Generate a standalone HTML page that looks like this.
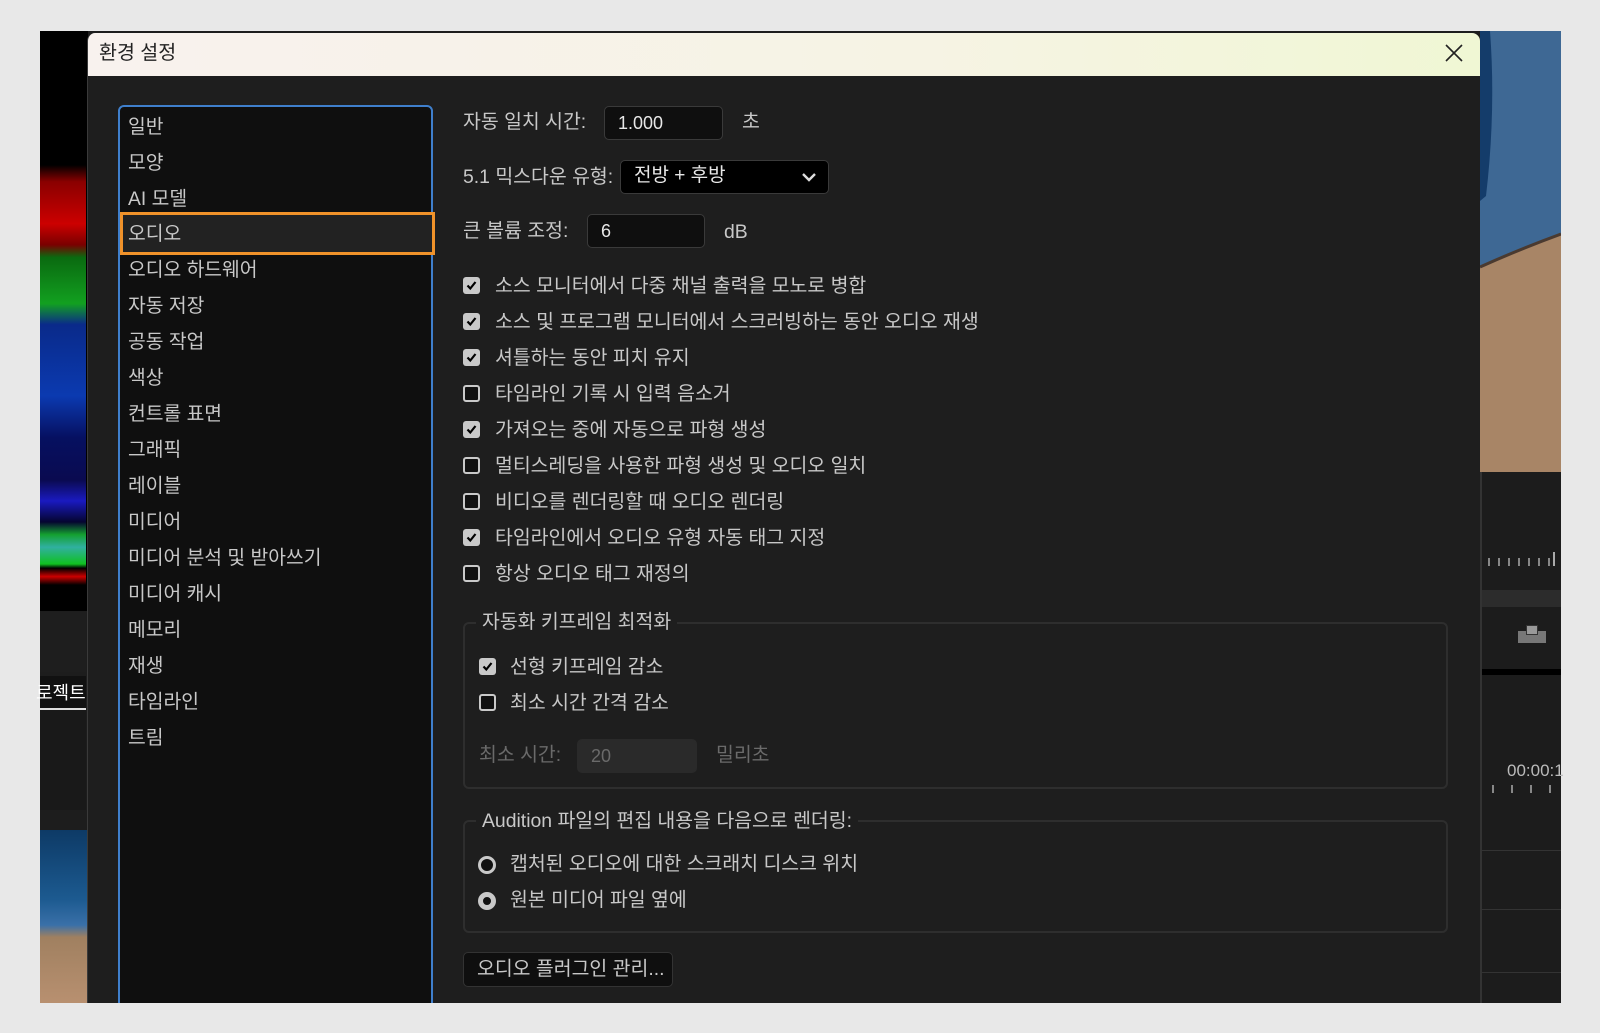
<!DOCTYPE html>
<html><head><meta charset="utf-8"><style>
*{margin:0;padding:0;box-sizing:border-box}
body{width:1600px;height:1033px;background:#e8e8e8;position:relative;overflow:hidden;font-family:"Liberation Sans","Noto Sans CJK KR",sans-serif}
.a{position:absolute}
.t{position:absolute;color:#c8c8c8;font-size:19.4px;line-height:22px;white-space:nowrap}
.cb{position:absolute;width:17px;height:17px;border-radius:3px}
.on{background:#c9c9c9}
.on svg{position:absolute;left:3px;top:3px}
.off{border:2.5px solid #c9c9c9;background:#111}
.inp{position:absolute;background:#0f0f0f;border:1px solid #3a3a3a;border-radius:5px;color:#e8e8e8;font-size:18px;padding-left:13px;line-height:32px}
.li{position:absolute;left:128px;color:#c8c8c8;font-size:19.3px;line-height:36px;white-space:nowrap}
</style></head><body>
<div class="a" style="left:40px;top:31px;width:1521px;height:972px;background:#1d1d1d"></div>
<div class="a" style="left:40px;top:31px;width:48px;height:580px;background:#000"></div>
<div class="a" style="left:40px;top:165px;width:46px;height:420px;background:linear-gradient(#000 0%,#8a0000 4%,#c00 14%,#7a0000 19%,#0a6a10 22%,#12a020 33%,#0a2a8a 38%,#0b3ab0 55%,#061060 65%,#0a0a50 75%,#1a1ac0 80%,#050530 85%,#14a030 88%,#30b0a0 91%,#10c020 95%,#000 96%,#c00 98%,#000 100%)"></div>
<div class="a" style="left:40px;top:612px;width:46px;height:60px;background:#1e1e1e"></div>
<div class="a" style="left:40px;top:676px;width:46px;height:36px;background:#111"></div>
<div class="t" style="left:36px;top:682px;color:#fff;font-size:18px">로젝트:</div>
<div class="a" style="left:40px;top:708px;width:46px;height:2px;background:#ddd"></div>
<div class="a" style="left:40px;top:710px;width:46px;height:100px;background:#191919"></div>
<div class="a" style="left:40px;top:830px;width:48px;height:173px;background:linear-gradient(#0d3a66 0%,#1c5a90 40%,#3a70a8 55%,#a08060 62%,#b89070 100%)"></div>
<svg class="a" style="left:1480px;top:31px" width="81" height="441" viewBox="0 0 81 441"><rect width="81" height="441" fill="#a88566"/><path d="M0 0H81V203Q40 218 0 236Z" fill="#3e6894"/><path d="M0 0H10Q16 80 6 165L0 170Z" fill="#143c6a"/><path d="M0 236Q40 218 81 203" stroke="#4a3a30" stroke-width="3" fill="none"/></svg>
<div class="a" style="left:1480px;top:472px;width:81px;height:531px;background:#1c1c1c;border-left:2px solid #333"></div>
<div class="a" style="left:1488px;top:558px;width:70px;height:8px;background:repeating-linear-gradient(90deg,#888 0 2px,transparent 2px 10px)"></div>
<div class="a" style="left:1553px;top:552px;width:2px;height:14px;background:#aaa"></div>
<div class="a" style="left:1482px;top:590px;width:79px;height:17px;background:#2c2c2c"></div>
<div class="a" style="left:1518px;top:631px;width:28px;height:12px;background:#777"></div>
<div class="a" style="left:1526px;top:625px;width:12px;height:10px;background:#999;border:1px solid #333"></div>
<div class="a" style="left:1482px;top:669px;width:79px;height:6px;background:#000"></div>
<div class="t" style="left:1507px;top:760px;font-size:17px;color:#bbb">00:00:1</div>
<div class="a" style="left:1492px;top:785px;width:65px;height:8px;background:repeating-linear-gradient(90deg,#888 0 2px,transparent 2px 19px)"></div>
<div class="a" style="left:1482px;top:850px;width:79px;height:1px;background:#333"></div>
<div class="a" style="left:1482px;top:909px;width:79px;height:1px;background:#333"></div>
<div class="a" style="left:1482px;top:972px;width:79px;height:1px;background:#333"></div>
<div class="a" style="left:87px;top:33px;width:1393px;height:970px;background:#1e1e1e;border-radius:8px 8px 0 0;overflow:hidden;border-left:1px solid #3a3a3a">
 <div class="a" style="left:0;top:0;width:1393px;height:43px;background:linear-gradient(90deg,#f8f2ee,#f6f3e4 60%,#f0f7d4)"></div>
</div>
<div class="t" style="left:99px;top:42px;color:#222;font-size:19.5px">환경 설정</div>
<svg class="a" style="left:1445px;top:44px" width="18" height="18" viewBox="0 0 18 18"><path d="M1 1L17 17M17 1L1 17" stroke="#222" stroke-width="1.6"/></svg>
<div class="a" style="left:118px;top:105px;width:315px;height:910px;background:#0f0f0f;border:2px solid #3f7fcc;border-radius:6px"></div>
<div class="a" style="left:120px;top:212px;width:315px;height:43px;background:#222;border:3px solid #f0922a"></div>
<div class="li" style="top:110px">일반</div>
<div class="li" style="top:146px">모양</div>
<div class="li" style="top:182px">AI 모델</div>
<div class="li" style="top:217px">오디오</div>
<div class="li" style="top:253px">오디오 하드웨어</div>
<div class="li" style="top:289px">자동 저장</div>
<div class="li" style="top:325px">공동 작업</div>
<div class="li" style="top:361px">색상</div>
<div class="li" style="top:397px">컨트롤 표면</div>
<div class="li" style="top:433px">그래픽</div>
<div class="li" style="top:469px">레이블</div>
<div class="li" style="top:505px">미디어</div>
<div class="li" style="top:541px">미디어 분석 및 받아쓰기</div>
<div class="li" style="top:577px">미디어 캐시</div>
<div class="li" style="top:613px">메모리</div>
<div class="li" style="top:649px">재생</div>
<div class="li" style="top:685px">타임라인</div>
<div class="li" style="top:721px">트림</div>

<div class="t" style="left:463px;top:111px">자동 일치 시간:</div>
<div class="inp" style="left:604px;top:106px;width:119px;height:34px">1.000</div>
<div class="t" style="left:742px;top:111px">초</div>
<div class="t" style="left:463px;top:166px">5.1 믹스다운 유형:</div>
<div class="inp" style="left:620px;top:160px;width:209px;height:34px;background:#000;font-size:19px;line-height:30px">전방 + 후방</div>
<svg class="a" style="left:801px;top:172px" width="16" height="10" viewBox="0 0 16 10"><path d="M2 2L8 8L14 2" stroke="#ddd" stroke-width="2.4" fill="none"/></svg>
<div class="t" style="left:463px;top:220px">큰 볼륨 조정:</div>
<div class="inp" style="left:587px;top:214px;width:118px;height:34px">6</div>
<div class="t" style="left:724px;top:221px">dB</div>

<div class="cb on" style="left:463px;top:277px"><svg width="11" height="11"><path d="M1.5 5.5L4.3 8.5L9.5 2" stroke="#000" stroke-width="2.2" fill="none"/></svg></div><div class="t" style="left:495px;top:275px">소스 모니터에서 다중 채널 출력을 모노로 병합</div>
<div class="cb on" style="left:463px;top:313px"><svg width="11" height="11"><path d="M1.5 5.5L4.3 8.5L9.5 2" stroke="#000" stroke-width="2.2" fill="none"/></svg></div><div class="t" style="left:495px;top:311px">소스 및 프로그램 모니터에서 스크러빙하는 동안 오디오 재생</div>
<div class="cb on" style="left:463px;top:349px"><svg width="11" height="11"><path d="M1.5 5.5L4.3 8.5L9.5 2" stroke="#000" stroke-width="2.2" fill="none"/></svg></div><div class="t" style="left:495px;top:347px">셔틀하는 동안 피치 유지</div>
<div class="cb off" style="left:463px;top:385px"></div><div class="t" style="left:495px;top:383px">타임라인 기록 시 입력 음소거</div>
<div class="cb on" style="left:463px;top:421px"><svg width="11" height="11"><path d="M1.5 5.5L4.3 8.5L9.5 2" stroke="#000" stroke-width="2.2" fill="none"/></svg></div><div class="t" style="left:495px;top:419px">가져오는 중에 자동으로 파형 생성</div>
<div class="cb off" style="left:463px;top:457px"></div><div class="t" style="left:495px;top:455px">멀티스레딩을 사용한 파형 생성 및 오디오 일치</div>
<div class="cb off" style="left:463px;top:493px"></div><div class="t" style="left:495px;top:491px">비디오를 렌더링할 때 오디오 렌더링</div>
<div class="cb on" style="left:463px;top:529px"><svg width="11" height="11"><path d="M1.5 5.5L4.3 8.5L9.5 2" stroke="#000" stroke-width="2.2" fill="none"/></svg></div><div class="t" style="left:495px;top:527px">타임라인에서 오디오 유형 자동 태그 지정</div>
<div class="cb off" style="left:463px;top:565px"></div><div class="t" style="left:495px;top:563px">항상 오디오 태그 재정의</div>

<div class="a" style="left:463px;top:622px;width:985px;height:167px;border:2px solid #2e2e2e;border-radius:6px"></div>
<div class="t" style="left:476px;top:611px;background:#1e1e1e;padding:0 6px">자동화 키프레임 최적화</div>
<div class="cb on" style="left:479px;top:658px"><svg width="11" height="11"><path d="M1.5 5.5L4.3 8.5L9.5 2" stroke="#000" stroke-width="2.2" fill="none"/></svg></div><div class="t" style="left:510px;top:656px">선형 키프레임 감소</div>
<div class="cb off" style="left:479px;top:694px"></div><div class="t" style="left:510px;top:692px">최소 시간 간격 감소</div>
<div class="t" style="left:479px;top:744px;color:#6a6a6a">최소 시간:</div>
<div class="inp" style="left:577px;top:739px;width:120px;height:34px;background:#2a2a2a;border-color:#2a2a2a;color:#6a6a6a">20</div>
<div class="t" style="left:716px;top:744px;color:#6a6a6a">밀리초</div>

<div class="a" style="left:463px;top:820px;width:985px;height:113px;border:2px solid #2e2e2e;border-radius:6px"></div>
<div class="t" style="left:476px;top:810px;background:#1e1e1e;padding:0 6px">Audition 파일의 편집 내용을 다음으로 렌더링:</div>
<div class="a" style="left:478px;top:856px;width:18px;height:18px;border-radius:50%;border:3.5px solid #c9c9c9;background:#111"></div>
<div class="t" style="left:510px;top:853px">캡처된 오디오에 대한 스크래치 디스크 위치</div>
<div class="a" style="left:478px;top:892px;width:18px;height:18px;border-radius:50%;border:5px solid #c9c9c9;background:#111"></div>
<div class="t" style="left:510px;top:889px">원본 미디어 파일 옆에</div>

<div class="a" style="left:463px;top:952px;width:210px;height:35px;background:#0f0f0f;border:1px solid #333;border-radius:5px"></div>
<div class="t" style="left:477px;top:958px">오디오 플러그인 관리...</div>
<div class="a" style="left:0;top:1003px;width:1600px;height:30px;background:#e8e8e8"></div>
</body></html>
